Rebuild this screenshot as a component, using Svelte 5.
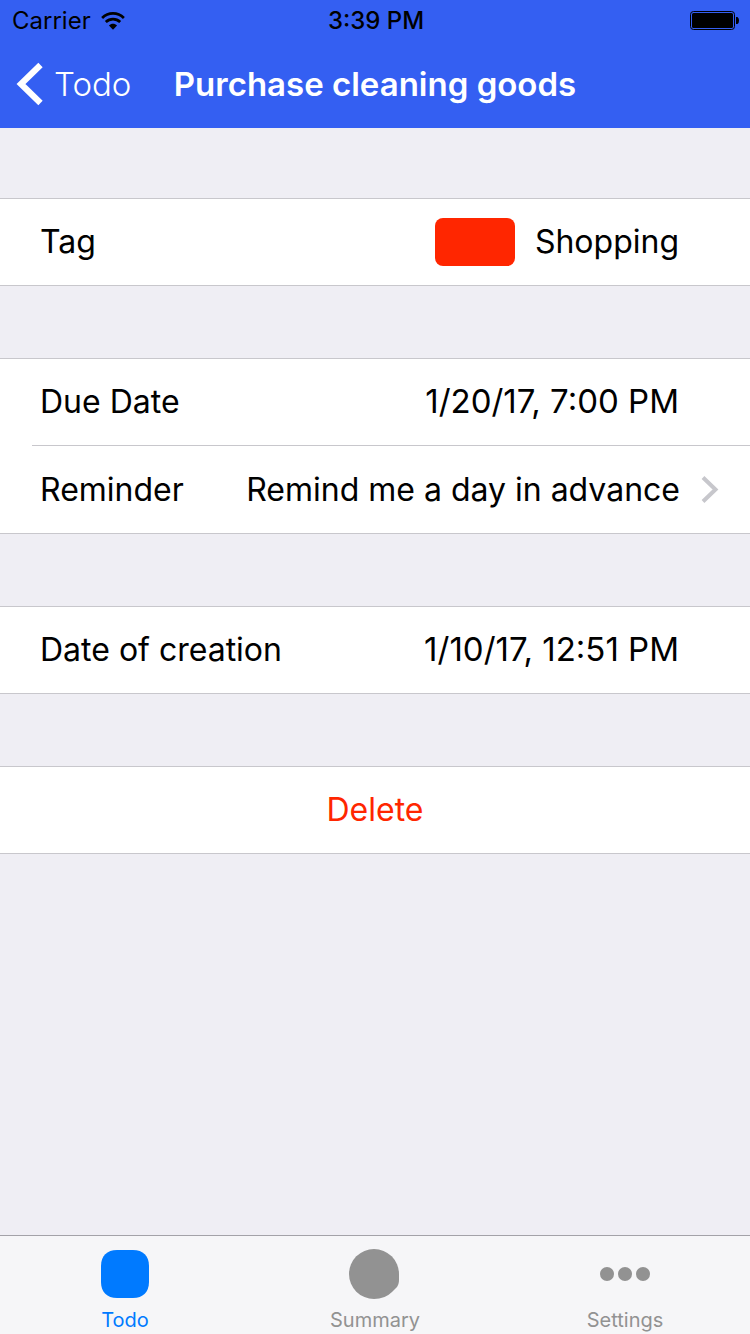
<script>
  const tabs = [
    { id: 'todo', label: 'Todo' },
    { id: 'summary', label: 'Summary' },
    { id: 'settings', label: 'Settings' }
  ];
  let active = $state('todo');
</script>

<div class="screen">
  <header>
    <div class="status">
      <div class="carrier">
        <span>Carrier</span>
        <svg width="24" height="20" viewBox="0 0 26 20" aria-hidden="true">
          <g fill="none" stroke="currentColor" stroke-width="3">
            <path d="M1.2 6.800C8 .2 18 .2 24.800 6.800" />
            <path d="M5.200 11.200C9.700 7 16.300 7 20.800 11.200" />
          </g>
          <path d="M8.600 15C11.200 12.400 14.800 12.400 17.400 15L13 19.400Z" fill="currentColor" />
        </svg>
      </div>
      <time>3:39 PM</time>
      <svg class="battery" width="50" height="20" viewBox="0 0 50 20" aria-hidden="true">
        <rect x=".5" y=".5" width="44" height="18" rx="3" fill="none" stroke="currentColor" />
        <rect x="2" y="2" width="41" height="15" rx="1.5" fill="currentColor" />
        <path d="M46 6h1.5q1.5 1 1.5 3.500t-1.500 3.500H46Z" fill="currentColor" />
      </svg>
    </div>
    <nav class="bar" aria-label="Navigation">
      <button class="back">
        <svg width="28" height="44" viewBox="0 0 28 44" aria-hidden="true">
          <path d="M24.500 3L5 22L24.500 41" fill="none" stroke="currentColor" stroke-width="6.200" />
        </svg>
        <span>Todo</span>
      </button>
      <h1>Purchase cleaning goods</h1>
    </nav>
  </header>

  <main>
    <section class="group">
      <div class="row">
        <span>Tag</span>
        <span class="value tag"><i class="swatch"></i>Shopping</span>
      </div>
    </section>

    <section class="group">
      <div class="row">
        <span>Due Date</span>
        <time class="value">1/20/17, 7:00 PM</time>
      </div>
      <button class="row link">
        <span>Reminder</span>
        <span class="value">Remind me a day in advance</span>
        <svg width="18" height="28" viewBox="0 0 18 28" aria-hidden="true">
          <path d="M3 1.500L15.500 13.500L3 25.500" fill="none" stroke="#c7c7cc" stroke-width="4" />
        </svg>
      </button>
    </section>

    <section class="group">
      <div class="row">
        <span>Date of creation</span>
        <time class="value">1/10/17, 12:51 PM</time>
      </div>
    </section>

    <section class="group">
      <button class="delete">Delete</button>
    </section>
  </main>

  <nav class="tabs" aria-label="Sections">
    {#each tabs as tab (tab.id)}
      <button class:active={active === tab.id} onclick={() => (active = tab.id)}>
        <svg width="50" height="50" viewBox="0 0 50 50" fill="currentColor" aria-hidden="true">
          {#if tab.id === 'todo'}
            <path d="M17 1H33C43 1 49 7 49 17V33C49 43 43 49 33 49H17C7 49 1 43 1 33V17C1 7 7 1 17 1Z" />
          {:else if tab.id === 'summary'}
            <path d="M24 0A25 25 0 0 1 49 25V31Q49 36 46.500 38.500L42 43Q35 50 24 50A25 25 0 0 1 24 0Z" />
          {:else}
            <circle cx="7" cy="25" r="7" />
            <circle cx="25" cy="25" r="7" />
            <circle cx="43" cy="25" r="7" />
          {/if}
        </svg>
        <span>{tab.label}</span>
      </button>
    {/each}
  </nav>
</div>

<style>
  :global(body) {
    background: #efeef4;
  }

  .screen {
    display: flex;
    flex-direction: column;
    min-height: 100vh;
    background: #efeef4;
    color: #000;
    font-family: Inter, "Liberation Sans", sans-serif;
    font-size: 32px;
    line-height: 40px;
  }

  button {
    margin: 0;
    padding: 0;
    border: 0;
    background: none;
    color: inherit;
    font: inherit;
    cursor: pointer;
  }

  svg {
    display: block;
    flex: none;
    overflow: visible;
  }

  header {
    background: #345ff2;
  }

  .status {
    display: grid;
    grid-template-columns: 1fr auto 1fr;
    align-items: center;
    box-sizing: border-box;
    height: 40px;
    padding: 2px 10px 0 12px;
    font-size: 24px;
    line-height: 38px;
  }

  .carrier {
    display: flex;
    align-items: center;
    gap: 10px;
  }

  .status time {
    font-weight: 500;
  }

  .battery {
    justify-self: end;
  }

  .bar {
    display: grid;
    grid-template-columns: 1fr auto 1fr;
    align-items: center;
    height: 88px;
    padding: 0 16px;
    color: #fff;
    font-size: 33px;
  }

  .back {
    display: flex;
    align-items: center;
    justify-self: start;
    gap: 10px;
    font-weight: 300;
  }

  h1 {
    margin: 0;
    font-size: 33px;
    font-weight: 600;
  }

  main {
    display: flex;
    flex: 1;
    flex-direction: column;
    gap: 72px;
    padding: 70px 0;
  }

  .group {
    display: flex;
    flex-direction: column;
    padding-left: 32px;
    background: #fff;
    box-shadow: inset 0 1px #c8c7cc, inset 0 -1px #c8c7cc;
  }

  .row {
    display: flex;
    align-items: center;
    justify-content: space-between;
    box-sizing: border-box;
    height: 88px;
    padding: 0 71px 0 8px;
  }

  .row:not(:last-child) {
    border-bottom: 1px solid #c8c7cc;
  }

  .value {
    margin-left: auto;
  }

  time.value {
    padding-bottom: 2px;
    font-size: 33px;
  }

  .link {
    gap: 20px;
    padding-right: 32px;
  }

  .tag {
    display: flex;
    align-items: center;
    gap: 20px;
  }

  .swatch {
    width: 80px;
    height: 48px;
    border-radius: 8px;
    background: #ff2600;
  }

  .delete {
    height: 88px;
    margin-left: -32px;
    color: #ff2600;
  }

  .tabs {
    display: grid;
    grid-template-columns: repeat(3, 1fr);
    border-top: 1px solid #a3a2a8;
    background: #f6f6f8;
    color: #929292;
  }

  .tabs button {
    display: flex;
    flex-direction: column;
    align-items: center;
    gap: 9px;
    padding: 13px 0 2px;
    font-size: 20px;
    line-height: 24px;
  }

  .tabs .active {
    color: #007aff;
  }
</style>
